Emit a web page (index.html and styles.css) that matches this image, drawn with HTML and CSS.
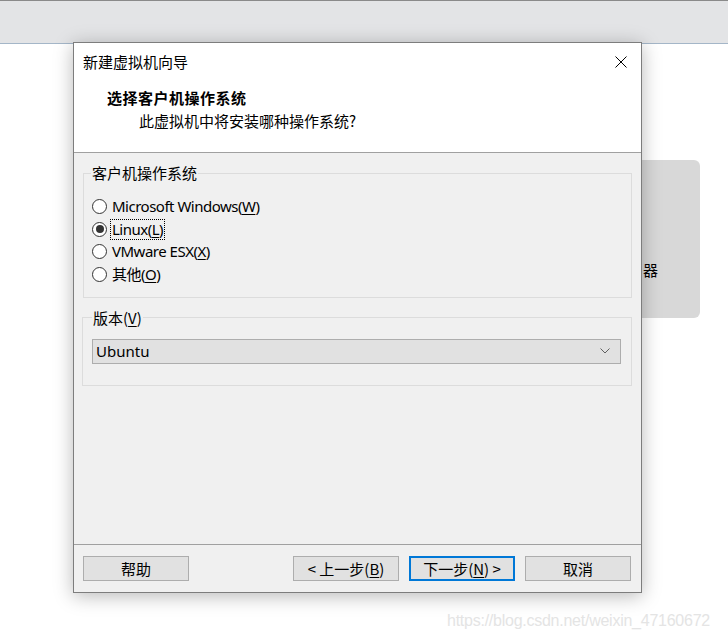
FILE: index.html
```html
<!DOCTYPE html>
<html lang="zh-CN">
<head>
<meta charset="utf-8">
<title>新建虚拟机向导</title>
<link rel="stylesheet" href="styles.css">
</head>
<body>
<div class="topbar"></div>
<div class="bgcard"><span class="bgcard-text">器</span></div>
<div class="watermark">https://blog.csdn.net/weixin_47160672</div>

<div class="dialog">
  <div class="header">
    <div class="titlebar">
      <span class="title">新建虚拟机向导</span>
      <svg class="close" width="12" height="12" viewBox="0 0 12 12"><path d="M0.5 0.5 L11.5 11.5 M11.5 0.5 L0.5 11.5" stroke="#000" stroke-width="1" fill="none"/></svg>
    </div>
    <div class="heading">选择客户机操作系统</div>
    <div class="subheading">此虚拟机中将安装哪种操作系统?</div>
  </div>

  <div class="body">
    <fieldset class="group group-os">
      <legend>客户机操作系统</legend>
      <div class="radio-row"><span class="radio"></span><span class="label">Microsoft Windows(<u>W</u>)</span></div>
      <div class="radio-row"><span class="radio checked"></span><span class="label focus">Linux(<u>L</u>)</span></div>
      <div class="radio-row"><span class="radio"></span><span class="label">VMware ESX(<u>X</u>)</span></div>
      <div class="radio-row"><span class="radio"></span><span class="label">其他(<u>O</u>)</span></div>
    </fieldset>

    <fieldset class="group group-ver">
      <legend>版本(<u>V</u>)</legend>
      <div class="combo">
        <span class="combo-text">Ubuntu</span>
        <svg class="chev" width="10" height="6" viewBox="0 0 10 6"><path d="M0.5 0.5 L5 5 L9.5 0.5" stroke="#606060" stroke-width="1" fill="none"/></svg>
      </div>
    </fieldset>
  </div>

  <div class="footer">
    <button class="btn">帮助</button>
    <div class="spacer"></div>
    <button class="btn">&lt; 上一步(<u>B</u>)</button>
    <button class="btn default">下一步(<u>N</u>) &gt;</button>
    <button class="btn">取消</button>
  </div>
</div>
</body>
</html>
```

FILE: styles.css
```css
* { box-sizing: border-box; }

html, body {
  margin: 0;
  padding: 0;
  background: #ffffff;
  width: 728px;
  height: 639px;
  overflow: hidden;
  font-family: "Noto Sans", "Noto Sans CJK SC", sans-serif;
  font-size: 15px;
  color: #000;
}

.topbar {
  height: 44px;
  background: #e3e4e6;
  border-top: 1px solid #8a8a8a;
  border-bottom: 1px solid #a4b6c8;
}

.bgcard {
  position: absolute;
  left: 600px;
  top: 160px;
  width: 100px;
  height: 158px;
  background: #d8d8d8;
  border-radius: 6px;
}

.bgcard-text {
  position: absolute;
  left: 43px;
  top: 100px;
  font-family: "Noto Sans CJK SC", sans-serif;
  font-size: 15px;
  line-height: 20px;
}

.watermark {
  position: absolute;
  left: 447px;
  top: 611px;
  font-family: "Liberation Sans", sans-serif;
  font-size: 16px;
  line-height: 20px;
  color: #e4e4e4;
  letter-spacing: -0.25px;
}

.dialog {
  position: absolute;
  left: 73px;
  top: 42px;
  width: 569px;
  height: 551px;
  border: 1px solid #7d7d7d;
  background: #f0f0f0;
  box-shadow: 0 3px 18px rgba(0, 0, 0, 0.28);
  display: flex;
  flex-direction: column;
}

.header {
  background: #ffffff;
  border-bottom: 1px solid #a0a0a0;
  height: 110px;
  font-family: "Noto Sans CJK SC", sans-serif;
}

.titlebar {
  height: 37px;
  display: flex;
  align-items: center;
  padding: 0 14px 0 9px;
  justify-content: space-between;
}

.title {
  line-height: 20px;
  margin-top: 1px;
}

.close {
  display: block;
  margin-top: 1px;
}

.heading {
  font-weight: bold;
  line-height: 20px;
  margin-top: 8px;
  padding-left: 33px;
  letter-spacing: 0.5px;
}

.subheading {
  line-height: 20px;
  margin-top: 3px;
  padding-left: 65px;
}

.body {
  flex: 1;
  padding: 10px 9px 0 9px;
}

.group {
  margin: 0;
  border: 1px solid #dcdcdc;
  padding: 0 8px 0 7px;
}

.group legend {
  padding: 0 1px;
  line-height: 20px;
  font-family: "Noto Sans CJK SC", sans-serif;
}

.group-os {
  padding-top: 12px;
  padding-bottom: 11px;
}

.group-ver {
  margin-top: 10px;
  margin-left: -1px;
  padding-left: 9px;
  padding-right: 10px;
  padding-top: 11px;
  padding-bottom: 21px;
}

.radio-row {
  display: flex;
  align-items: center;
  height: 22.7px;
}

.radio {
  width: 15px;
  height: 15px;
  border: 1px solid #333;
  border-radius: 50%;
  background: #fff;
  margin-left: 1px;
  margin-right: 4px;
  display: flex;
  align-items: center;
  justify-content: center;
  flex: none;
}

.radio.checked::after {
  content: "";
  width: 8px;
  height: 8px;
  border-radius: 50%;
  background: #333;
}

.label {
  line-height: 19px;
  padding: 0 1px;
  font-family: "Noto Sans", "Noto Sans CJK SC", sans-serif;
  letter-spacing: -0.5px;
}

.label.focus {
  outline: 1px dotted #000;
}

u {
  text-decoration: underline;
  text-underline-offset: 2px;
}

.combo {
  height: 25px;
  background: #e1e1e1;
  border: 1px solid #adadad;
  display: flex;
  align-items: center;
  justify-content: space-between;
  padding: 0 10px 0 3px;
}

.combo-text {
  line-height: 20px;
}

.chev {
  display: block;
}

.footer {
  border-top: 1px solid #a0a0a0;
  padding: 11px 10px 0 9px;
  height: 48px;
  display: flex;
  gap: 10px;
}

.spacer {
  flex: 1;
}

.btn {
  width: 106px;
  height: 25px;
  background: #e1e1e1;
  border: 1px solid #adadad;
  font-family: "Noto Sans CJK SC", sans-serif;
  font-size: 15px;
  line-height: 20px;
  color: #000;
  padding: 0;
  margin: 0;
}

.btn.default {
  border: 2px solid #0078d7;
}
```
